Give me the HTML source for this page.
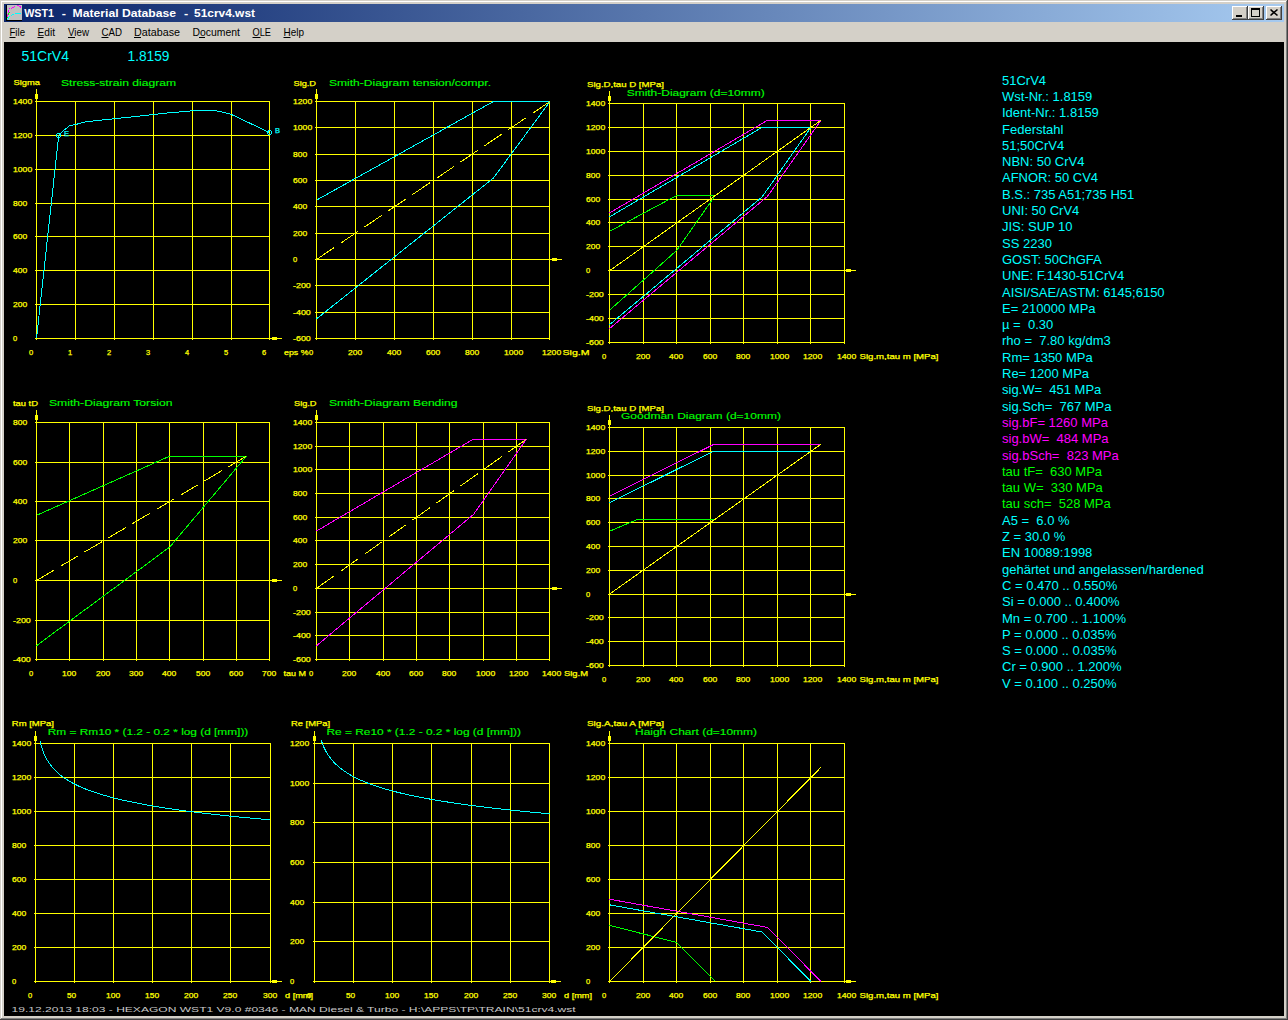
<!DOCTYPE html>
<html lang="en"><head><meta charset="utf-8"><title>WST1 - Material Database - 51crv4.wst</title>
<style>html,body{margin:0;padding:0;background:#d4d0c8;overflow:hidden}svg{display:block;font-family:'Liberation Sans', sans-serif}text{white-space:pre}.g rect,.g polyline,.g circle{shape-rendering:crispEdges}</style></head><body>
<svg width="1288" height="1020" viewBox="0 0 1288 1020">
<defs><linearGradient id="tg" x1="0" y1="0" x2="1" y2="0"><stop offset="0" stop-color="#0a246a"/><stop offset="1" stop-color="#a6caf0"/></linearGradient></defs>
<rect x="0" y="0" width="1288" height="1020" fill="#d4d0c8"/>
<rect x="1" y="1" width="1285" height="1" fill="#ffffff"/>
<rect x="1" y="1" width="1" height="1017" fill="#ffffff"/>
<rect x="1286" y="1" width="1" height="1018" fill="#808080"/>
<rect x="1" y="1018" width="1286" height="1" fill="#808080"/>
<rect x="1287" y="0" width="1" height="1020" fill="#404040"/>
<rect x="0" y="1019" width="1288" height="1" fill="#404040"/>
<rect x="4" y="4" width="1280" height="18" fill="url(#tg)"/>
<g class="g">
<rect x="6" y="5" width="16" height="16" fill="#c0c0c0"/>
<rect x="6" y="5" width="1" height="16" fill="#000000"/>
<rect x="6" y="20" width="16" height="1" fill="#000000"/>
<rect x="17" y="5" width="1" height="1" fill="#ff00ff"/>
<rect x="18" y="5" width="1" height="1" fill="#ff00ff"/>
<rect x="19" y="6" width="1" height="1" fill="#ff00ff"/>
<rect x="20" y="6" width="1" height="1" fill="#ff00ff"/>
<rect x="20" y="7" width="1" height="1" fill="#ff00ff"/>
<rect x="14" y="6" width="1" height="1" fill="#ff00ff"/>
<rect x="12" y="7" width="1" height="1" fill="#ff00ff"/>
<rect x="13" y="7" width="1" height="1" fill="#ff00ff"/>
<rect x="11" y="8" width="1" height="1" fill="#ff00ff"/>
<rect x="9" y="8" width="1" height="1" fill="#ff00ff"/>
<rect x="8" y="10" width="1" height="1" fill="#ff00ff"/>
<rect x="8" y="11" width="1" height="1" fill="#ff00ff"/>
<rect x="8" y="12" width="1" height="1" fill="#ff00ff"/>
<rect x="7" y="14" width="1" height="1" fill="#ff00ff"/>
<rect x="7" y="15" width="1" height="1" fill="#ff00ff"/>
<rect x="7" y="16" width="1" height="1" fill="#ff00ff"/>
<rect x="9" y="12" width="1" height="1" fill="#00ff00"/>
<rect x="8" y="13" width="1" height="1" fill="#00ff00"/>
<rect x="8" y="14" width="1" height="1" fill="#00ff00"/>
<rect x="7" y="17" width="1" height="1" fill="#00ff00"/>
<rect x="15" y="13" width="1" height="1" fill="#00ffff"/>
<rect x="16" y="13" width="1" height="1" fill="#00ffff"/>
<rect x="17" y="13" width="1" height="1" fill="#00ffff"/>
<rect x="18" y="13" width="1" height="1" fill="#00ffff"/>
<rect x="19" y="13" width="1" height="1" fill="#00ffff"/>
<rect x="20" y="13" width="1" height="1" fill="#00ffff"/>
<rect x="12" y="14" width="1" height="1" fill="#00ffff"/>
<rect x="13" y="14" width="1" height="1" fill="#00ffff"/>
<rect x="11" y="15" width="1" height="1" fill="#00ffff"/>
<rect x="9" y="16" width="1" height="1" fill="#00ffff"/>
<rect x="8" y="17" width="1" height="1" fill="#00ffff"/>
<rect x="8" y="18" width="1" height="1" fill="#00ffff"/>
<rect x="7" y="19" width="1" height="1" fill="#00ffff"/>
</g>
<text y="17" font-size="11" font-weight="bold" fill="#ffffff"><tspan x="24.2" textLength="29.8" lengthAdjust="spacingAndGlyphs">WST1</tspan><tspan x="61.8" textLength="4.2" lengthAdjust="spacingAndGlyphs">-</tspan><tspan x="72.6" textLength="103.4" lengthAdjust="spacingAndGlyphs">Material Database</tspan><tspan x="184" textLength="4.2" lengthAdjust="spacingAndGlyphs">-</tspan><tspan x="194" textLength="61" lengthAdjust="spacingAndGlyphs">51crv4.wst</tspan></text>
<g class="g">
<rect x="1232" y="6" width="16" height="14" fill="#d4d0c8"/>
<rect x="1232" y="6" width="15" height="1" fill="#ffffff"/>
<rect x="1232" y="6" width="1" height="13" fill="#ffffff"/>
<rect x="1247" y="6" width="1" height="14" fill="#404040"/>
<rect x="1232" y="19" width="16" height="1" fill="#404040"/>
<rect x="1246" y="7" width="1" height="12" fill="#808080"/>
<rect x="1233" y="18" width="14" height="1" fill="#808080"/>
<rect x="1236" y="15" width="6" height="2" fill="#000"/>
<rect x="1248" y="6" width="16" height="14" fill="#d4d0c8"/>
<rect x="1248" y="6" width="15" height="1" fill="#ffffff"/>
<rect x="1248" y="6" width="1" height="13" fill="#ffffff"/>
<rect x="1263" y="6" width="1" height="14" fill="#404040"/>
<rect x="1248" y="19" width="16" height="1" fill="#404040"/>
<rect x="1262" y="7" width="1" height="12" fill="#808080"/>
<rect x="1249" y="18" width="14" height="1" fill="#808080"/>
<rect x="1251" y="8" width="9" height="9" fill="#000"/>
<rect x="1252" y="10" width="7" height="6" fill="#d4d0c8"/>
<rect x="1266" y="6" width="16" height="14" fill="#d4d0c8"/>
<rect x="1266" y="6" width="15" height="1" fill="#ffffff"/>
<rect x="1266" y="6" width="1" height="13" fill="#ffffff"/>
<rect x="1281" y="6" width="1" height="14" fill="#404040"/>
<rect x="1266" y="19" width="16" height="1" fill="#404040"/>
<rect x="1280" y="7" width="1" height="12" fill="#808080"/>
<rect x="1267" y="18" width="14" height="1" fill="#808080"/>
<path d="M1270.5 9.5 L1277.5 15.5 M1277.5 9.5 L1270.5 15.5" stroke="#000" stroke-width="1.6" fill="none"/>
</g>
<text x="9.5" y="36" font-size="11" fill="#000000" textLength="15.5" lengthAdjust="spacingAndGlyphs">File</text>
<rect x="9.5" y="37" width="6" height="1" fill="#000000"/>
<text x="37.5" y="36" font-size="11" fill="#000000" textLength="17.5" lengthAdjust="spacingAndGlyphs">Edit</text>
<rect x="37.5" y="37" width="6" height="1" fill="#000000"/>
<text x="68" y="36" font-size="11" fill="#000000" textLength="21" lengthAdjust="spacingAndGlyphs">View</text>
<rect x="68" y="37" width="7" height="1" fill="#000000"/>
<text x="101.5" y="36" font-size="11" fill="#000000" textLength="20.5" lengthAdjust="spacingAndGlyphs">CAD</text>
<rect x="101.5" y="37" width="7" height="1" fill="#000000"/>
<text x="134" y="36" font-size="11" fill="#000000" textLength="46" lengthAdjust="spacingAndGlyphs">Database</text>
<rect x="134" y="37" width="7" height="1" fill="#000000"/>
<text x="192.5" y="36" font-size="11" fill="#000000" textLength="47.5" lengthAdjust="spacingAndGlyphs">Document</text>
<rect x="199" y="37" width="6" height="1" fill="#000000"/>
<text x="252.5" y="36" font-size="11" fill="#000000" textLength="18.5" lengthAdjust="spacingAndGlyphs">OLE</text>
<rect x="252.5" y="37" width="8" height="1" fill="#000000"/>
<text x="283.5" y="36" font-size="11" fill="#000000" textLength="20.5" lengthAdjust="spacingAndGlyphs">Help</text>
<rect x="283.5" y="37" width="7" height="1" fill="#000000"/>
<rect x="4" y="42" width="1280" height="974" fill="#000000"/>
<text x="21.5" y="61" font-size="14" fill="#00ffff" textLength="47.5" lengthAdjust="spacingAndGlyphs">51CrV4</text>
<text x="127.5" y="61" font-size="14" fill="#00ffff" textLength="42" lengthAdjust="spacingAndGlyphs">1.8159</text>
<text x="1002" y="84.6" font-size="13" fill="#00ffff" xml:space="preserve">51CrV4</text>
<text x="1002" y="100.9" font-size="13" fill="#00ffff" xml:space="preserve">Wst-Nr.: 1.8159</text>
<text x="1002" y="117.2" font-size="13" fill="#00ffff" xml:space="preserve">Ident-Nr.: 1.8159</text>
<text x="1002" y="133.5" font-size="13" fill="#00ffff" xml:space="preserve">Federstahl</text>
<text x="1002" y="149.8" font-size="13" fill="#00ffff" xml:space="preserve">51;50CrV4</text>
<text x="1002" y="166.1" font-size="13" fill="#00ffff" xml:space="preserve">NBN: 50 CrV4</text>
<text x="1002" y="182.4" font-size="13" fill="#00ffff" xml:space="preserve">AFNOR: 50 CV4</text>
<text x="1002" y="198.7" font-size="13" fill="#00ffff" xml:space="preserve">B.S.: 735 A51;735 H51</text>
<text x="1002" y="215" font-size="13" fill="#00ffff" xml:space="preserve">UNI: 50 CrV4</text>
<text x="1002" y="231.3" font-size="13" fill="#00ffff" xml:space="preserve">JIS: SUP 10</text>
<text x="1002" y="247.6" font-size="13" fill="#00ffff" xml:space="preserve">SS 2230</text>
<text x="1002" y="263.9" font-size="13" fill="#00ffff" xml:space="preserve">GOST: 50ChGFA</text>
<text x="1002" y="280.2" font-size="13" fill="#00ffff" xml:space="preserve">UNE: F.1430-51CrV4</text>
<text x="1002" y="296.5" font-size="13" fill="#00ffff" xml:space="preserve">AISI/SAE/ASTM: 6145;6150</text>
<text x="1002" y="312.8" font-size="13" fill="#00ffff" xml:space="preserve">E= 210000 MPa</text>
<text x="1002" y="329.1" font-size="13" fill="#00ffff" xml:space="preserve">µ =  0.30</text>
<text x="1002" y="345.4" font-size="13" fill="#00ffff" xml:space="preserve">rho =  7.80 kg/dm3</text>
<text x="1002" y="361.7" font-size="13" fill="#00ffff" xml:space="preserve">Rm= 1350 MPa</text>
<text x="1002" y="378" font-size="13" fill="#00ffff" xml:space="preserve">Re= 1200 MPa</text>
<text x="1002" y="394.3" font-size="13" fill="#00ffff" xml:space="preserve">sig.W=  451 MPa</text>
<text x="1002" y="410.6" font-size="13" fill="#00ffff" xml:space="preserve">sig.Sch=  767 MPa</text>
<text x="1002" y="426.9" font-size="13" fill="#ff00ff" xml:space="preserve">sig.bF= 1260 MPa</text>
<text x="1002" y="443.2" font-size="13" fill="#ff00ff" xml:space="preserve">sig.bW=  484 MPa</text>
<text x="1002" y="459.5" font-size="13" fill="#ff00ff" xml:space="preserve">sig.bSch=  823 MPa</text>
<text x="1002" y="475.8" font-size="13" fill="#00ff00" xml:space="preserve">tau tF=  630 MPa</text>
<text x="1002" y="492.1" font-size="13" fill="#00ff00" xml:space="preserve">tau W=  330 MPa</text>
<text x="1002" y="508.4" font-size="13" fill="#00ff00" xml:space="preserve">tau sch=  528 MPa</text>
<text x="1002" y="524.7" font-size="13" fill="#00ffff" xml:space="preserve">A5 =  6.0 %</text>
<text x="1002" y="541" font-size="13" fill="#00ffff" xml:space="preserve">Z = 30.0 %</text>
<text x="1002" y="557.3" font-size="13" fill="#00ffff" xml:space="preserve">EN 10089:1998</text>
<text x="1002" y="573.6" font-size="13" fill="#00ffff" xml:space="preserve">gehärtet und angelassen/hardened</text>
<text x="1002" y="589.9" font-size="13" fill="#00ffff" xml:space="preserve">C = 0.470 .. 0.550%</text>
<text x="1002" y="606.2" font-size="13" fill="#00ffff" xml:space="preserve">Si = 0.000 .. 0.400%</text>
<text x="1002" y="622.5" font-size="13" fill="#00ffff" xml:space="preserve">Mn = 0.700 .. 1.100%</text>
<text x="1002" y="638.8" font-size="13" fill="#00ffff" xml:space="preserve">P = 0.000 .. 0.035%</text>
<text x="1002" y="655.1" font-size="13" fill="#00ffff" xml:space="preserve">S = 0.000 .. 0.035%</text>
<text x="1002" y="671.4" font-size="13" fill="#00ffff" xml:space="preserve">Cr = 0.900 .. 1.200%</text>
<text x="1002" y="687.7" font-size="13" fill="#00ffff" xml:space="preserve">V = 0.100 .. 0.250%</text>
<g class="g">
<rect x="35" y="338" width="235" height="1" fill="#ffff00"/>
<text x="13" y="340.6" font-size="7" fill="#ffff00" textLength="4.2" lengthAdjust="spacingAndGlyphs" stroke="#ffff00" stroke-width="0.25">0</text>
<rect x="35" y="304" width="235" height="1" fill="#ffff00"/>
<text x="13" y="306.6" font-size="7" fill="#ffff00" textLength="14.2" lengthAdjust="spacingAndGlyphs" stroke="#ffff00" stroke-width="0.25">200</text>
<rect x="35" y="270" width="235" height="1" fill="#ffff00"/>
<text x="13" y="272.6" font-size="7" fill="#ffff00" textLength="14.2" lengthAdjust="spacingAndGlyphs" stroke="#ffff00" stroke-width="0.25">400</text>
<rect x="35" y="236" width="235" height="1" fill="#ffff00"/>
<text x="13" y="238.6" font-size="7" fill="#ffff00" textLength="14.2" lengthAdjust="spacingAndGlyphs" stroke="#ffff00" stroke-width="0.25">600</text>
<rect x="35" y="203" width="235" height="1" fill="#ffff00"/>
<text x="13" y="205.6" font-size="7" fill="#ffff00" textLength="14.2" lengthAdjust="spacingAndGlyphs" stroke="#ffff00" stroke-width="0.25">800</text>
<rect x="35" y="169" width="235" height="1" fill="#ffff00"/>
<text x="13" y="171.6" font-size="7" fill="#ffff00" textLength="19.2" lengthAdjust="spacingAndGlyphs" stroke="#ffff00" stroke-width="0.25">1000</text>
<rect x="35" y="135" width="235" height="1" fill="#ffff00"/>
<text x="13" y="137.6" font-size="7" fill="#ffff00" textLength="19.2" lengthAdjust="spacingAndGlyphs" stroke="#ffff00" stroke-width="0.25">1200</text>
<rect x="35" y="101" width="235" height="1" fill="#ffff00"/>
<text x="13" y="103.6" font-size="7" fill="#ffff00" textLength="19.2" lengthAdjust="spacingAndGlyphs" stroke="#ffff00" stroke-width="0.25">1400</text>
<rect x="36" y="101" width="1" height="239" fill="#ffff00"/>
<text x="29" y="355" font-size="7" fill="#ffff00" textLength="4.2" lengthAdjust="spacingAndGlyphs" stroke="#ffff00" stroke-width="0.25">0</text>
<rect x="75" y="101" width="1" height="239" fill="#ffff00"/>
<text x="68" y="355" font-size="7" fill="#ffff00" textLength="4.2" lengthAdjust="spacingAndGlyphs" stroke="#ffff00" stroke-width="0.25">1</text>
<rect x="114" y="101" width="1" height="239" fill="#ffff00"/>
<text x="107" y="355" font-size="7" fill="#ffff00" textLength="4.2" lengthAdjust="spacingAndGlyphs" stroke="#ffff00" stroke-width="0.25">2</text>
<rect x="153" y="101" width="1" height="239" fill="#ffff00"/>
<text x="146" y="355" font-size="7" fill="#ffff00" textLength="4.2" lengthAdjust="spacingAndGlyphs" stroke="#ffff00" stroke-width="0.25">3</text>
<rect x="192" y="101" width="1" height="239" fill="#ffff00"/>
<text x="185" y="355" font-size="7" fill="#ffff00" textLength="4.2" lengthAdjust="spacingAndGlyphs" stroke="#ffff00" stroke-width="0.25">4</text>
<rect x="231" y="101" width="1" height="239" fill="#ffff00"/>
<text x="224" y="355" font-size="7" fill="#ffff00" textLength="4.2" lengthAdjust="spacingAndGlyphs" stroke="#ffff00" stroke-width="0.25">5</text>
<rect x="269" y="101" width="1" height="239" fill="#ffff00"/>
<text x="262" y="355" font-size="7" fill="#ffff00" textLength="4.2" lengthAdjust="spacingAndGlyphs" stroke="#ffff00" stroke-width="0.25">6</text>
<rect x="36" y="89" width="1" height="13" fill="#ffff00"/>
<rect x="35" y="94" width="3" height="5" fill="#ffff00"/>
<rect x="269" y="338" width="13" height="1" fill="#ffff00"/>
<rect x="272" y="337" width="5" height="3" fill="#ffff00"/>
<text x="13.5" y="85" font-size="7" fill="#ffff00" textLength="26.5" lengthAdjust="spacingAndGlyphs" stroke="#ffff00" stroke-width="0.25">Sigma</text>
<text x="61" y="86" font-size="9" fill="#00ff00" textLength="115" lengthAdjust="spacingAndGlyphs" stroke="#00ff00" stroke-width="0.12">Stress-strain diagram</text>
<text x="284" y="355" font-size="7" fill="#ffff00" textLength="24.5" lengthAdjust="spacingAndGlyphs" stroke="#ffff00" stroke-width="0.25">eps %</text>
<polyline points="36.5,338.5 58.7,135.5 62.5,131.5 69.5,125.7 75.8,124.5 85.8,121.7 115.1,118.7 153.5,114.5 174,112.3 186.5,111.5 194.5,110.5 213.5,110.5 219.5,111.5 224.5,112.5 231.5,114.5 269.5,132.5" fill="none" stroke="#00ffff" stroke-width="1"/>
<circle cx="58.5" cy="135.5" r="2" fill="none" stroke="#00ffff"/>
<circle cx="269.5" cy="132.5" r="2" fill="none" stroke="#00ffff"/>
<text x="64" y="136" font-size="6.5" fill="#00ffff" textLength="5" lengthAdjust="spacingAndGlyphs" stroke="#00ffff" stroke-width="0.25">E</text>
<text x="275" y="132.9" font-size="6.5" fill="#00ffff" textLength="5" lengthAdjust="spacingAndGlyphs" stroke="#00ffff" stroke-width="0.25">B</text>
<rect x="315" y="338" width="235" height="1" fill="#ffff00"/>
<text x="293" y="340.6" font-size="7" fill="#ffff00" textLength="17.8" lengthAdjust="spacingAndGlyphs" stroke="#ffff00" stroke-width="0.25">-600</text>
<rect x="315" y="312" width="235" height="1" fill="#ffff00"/>
<text x="293" y="314.6" font-size="7" fill="#ffff00" textLength="17.8" lengthAdjust="spacingAndGlyphs" stroke="#ffff00" stroke-width="0.25">-400</text>
<rect x="315" y="285" width="235" height="1" fill="#ffff00"/>
<text x="293" y="287.6" font-size="7" fill="#ffff00" textLength="17.8" lengthAdjust="spacingAndGlyphs" stroke="#ffff00" stroke-width="0.25">-200</text>
<rect x="315" y="259" width="235" height="1" fill="#ffff00"/>
<text x="293" y="261.6" font-size="7" fill="#ffff00" textLength="4.2" lengthAdjust="spacingAndGlyphs" stroke="#ffff00" stroke-width="0.25">0</text>
<rect x="315" y="233" width="235" height="1" fill="#ffff00"/>
<text x="293" y="235.6" font-size="7" fill="#ffff00" textLength="14.2" lengthAdjust="spacingAndGlyphs" stroke="#ffff00" stroke-width="0.25">200</text>
<rect x="315" y="206" width="235" height="1" fill="#ffff00"/>
<text x="293" y="208.6" font-size="7" fill="#ffff00" textLength="14.2" lengthAdjust="spacingAndGlyphs" stroke="#ffff00" stroke-width="0.25">400</text>
<rect x="315" y="180" width="235" height="1" fill="#ffff00"/>
<text x="293" y="182.6" font-size="7" fill="#ffff00" textLength="14.2" lengthAdjust="spacingAndGlyphs" stroke="#ffff00" stroke-width="0.25">600</text>
<rect x="315" y="154" width="235" height="1" fill="#ffff00"/>
<text x="293" y="156.6" font-size="7" fill="#ffff00" textLength="14.2" lengthAdjust="spacingAndGlyphs" stroke="#ffff00" stroke-width="0.25">800</text>
<rect x="315" y="127" width="235" height="1" fill="#ffff00"/>
<text x="293" y="129.6" font-size="7" fill="#ffff00" textLength="19.2" lengthAdjust="spacingAndGlyphs" stroke="#ffff00" stroke-width="0.25">1000</text>
<rect x="315" y="101" width="235" height="1" fill="#ffff00"/>
<text x="293" y="103.6" font-size="7" fill="#ffff00" textLength="19.2" lengthAdjust="spacingAndGlyphs" stroke="#ffff00" stroke-width="0.25">1200</text>
<rect x="316" y="101" width="1" height="239" fill="#ffff00"/>
<text x="309" y="355" font-size="7" fill="#ffff00" textLength="4.2" lengthAdjust="spacingAndGlyphs" stroke="#ffff00" stroke-width="0.25">0</text>
<rect x="355" y="101" width="1" height="239" fill="#ffff00"/>
<text x="348" y="355" font-size="7" fill="#ffff00" textLength="14.2" lengthAdjust="spacingAndGlyphs" stroke="#ffff00" stroke-width="0.25">200</text>
<rect x="394" y="101" width="1" height="239" fill="#ffff00"/>
<text x="387" y="355" font-size="7" fill="#ffff00" textLength="14.2" lengthAdjust="spacingAndGlyphs" stroke="#ffff00" stroke-width="0.25">400</text>
<rect x="433" y="101" width="1" height="239" fill="#ffff00"/>
<text x="426" y="355" font-size="7" fill="#ffff00" textLength="14.2" lengthAdjust="spacingAndGlyphs" stroke="#ffff00" stroke-width="0.25">600</text>
<rect x="472" y="101" width="1" height="239" fill="#ffff00"/>
<text x="465" y="355" font-size="7" fill="#ffff00" textLength="14.2" lengthAdjust="spacingAndGlyphs" stroke="#ffff00" stroke-width="0.25">800</text>
<rect x="511" y="101" width="1" height="239" fill="#ffff00"/>
<text x="504" y="355" font-size="7" fill="#ffff00" textLength="19.2" lengthAdjust="spacingAndGlyphs" stroke="#ffff00" stroke-width="0.25">1000</text>
<rect x="549" y="101" width="1" height="239" fill="#ffff00"/>
<text x="542" y="355" font-size="7" fill="#ffff00" textLength="19.2" lengthAdjust="spacingAndGlyphs" stroke="#ffff00" stroke-width="0.25">1200</text>
<rect x="316" y="89" width="1" height="13" fill="#ffff00"/>
<rect x="315" y="94" width="3" height="5" fill="#ffff00"/>
<rect x="549" y="259" width="13" height="1" fill="#ffff00"/>
<rect x="552" y="258" width="5" height="3" fill="#ffff00"/>
<text x="293.5" y="85.5" font-size="7" fill="#ffff00" textLength="22.5" lengthAdjust="spacingAndGlyphs" stroke="#ffff00" stroke-width="0.25">Sig.D</text>
<text x="329" y="86" font-size="9" fill="#00ff00" textLength="162" lengthAdjust="spacingAndGlyphs" stroke="#00ff00" stroke-width="0.12">Smith-Diagram tension/compr.</text>
<text x="562.5" y="355" font-size="7" fill="#ffff00" textLength="27" lengthAdjust="spacingAndGlyphs" stroke="#ffff00" stroke-width="0.25">Sig.M</text>
<polyline points="316.5,200.12 493.37,101.5 550,101.5" fill="none" stroke="#00ffff" stroke-width="1"/>
<polyline points="316.5,318.88 493.37,178.13 550,101.5" fill="none" stroke="#00ffff" stroke-width="1"/>
<polyline points="316.5,259.5 550,101.5" fill="none" stroke="#ffff00" stroke-width="1" stroke-dasharray="20.83 8.15"/>
<rect x="608" y="342" width="237" height="1" fill="#ffff00"/>
<text x="586" y="344.6" font-size="7" fill="#ffff00" textLength="17.8" lengthAdjust="spacingAndGlyphs" stroke="#ffff00" stroke-width="0.25">-600</text>
<rect x="608" y="318" width="237" height="1" fill="#ffff00"/>
<text x="586" y="320.6" font-size="7" fill="#ffff00" textLength="17.8" lengthAdjust="spacingAndGlyphs" stroke="#ffff00" stroke-width="0.25">-400</text>
<rect x="608" y="294" width="237" height="1" fill="#ffff00"/>
<text x="586" y="296.6" font-size="7" fill="#ffff00" textLength="17.8" lengthAdjust="spacingAndGlyphs" stroke="#ffff00" stroke-width="0.25">-200</text>
<rect x="608" y="270" width="237" height="1" fill="#ffff00"/>
<text x="586" y="272.6" font-size="7" fill="#ffff00" textLength="4.2" lengthAdjust="spacingAndGlyphs" stroke="#ffff00" stroke-width="0.25">0</text>
<rect x="608" y="246" width="237" height="1" fill="#ffff00"/>
<text x="586" y="248.6" font-size="7" fill="#ffff00" textLength="14.2" lengthAdjust="spacingAndGlyphs" stroke="#ffff00" stroke-width="0.25">200</text>
<rect x="608" y="222" width="237" height="1" fill="#ffff00"/>
<text x="586" y="224.6" font-size="7" fill="#ffff00" textLength="14.2" lengthAdjust="spacingAndGlyphs" stroke="#ffff00" stroke-width="0.25">400</text>
<rect x="608" y="199" width="237" height="1" fill="#ffff00"/>
<text x="586" y="201.6" font-size="7" fill="#ffff00" textLength="14.2" lengthAdjust="spacingAndGlyphs" stroke="#ffff00" stroke-width="0.25">600</text>
<rect x="608" y="175" width="237" height="1" fill="#ffff00"/>
<text x="586" y="177.6" font-size="7" fill="#ffff00" textLength="14.2" lengthAdjust="spacingAndGlyphs" stroke="#ffff00" stroke-width="0.25">800</text>
<rect x="608" y="151" width="237" height="1" fill="#ffff00"/>
<text x="586" y="153.6" font-size="7" fill="#ffff00" textLength="19.2" lengthAdjust="spacingAndGlyphs" stroke="#ffff00" stroke-width="0.25">1000</text>
<rect x="608" y="127" width="237" height="1" fill="#ffff00"/>
<text x="586" y="129.6" font-size="7" fill="#ffff00" textLength="19.2" lengthAdjust="spacingAndGlyphs" stroke="#ffff00" stroke-width="0.25">1200</text>
<rect x="608" y="103" width="237" height="1" fill="#ffff00"/>
<text x="586" y="105.6" font-size="7" fill="#ffff00" textLength="19.2" lengthAdjust="spacingAndGlyphs" stroke="#ffff00" stroke-width="0.25">1400</text>
<rect x="609" y="103" width="1" height="241" fill="#ffff00"/>
<text x="602" y="359" font-size="7" fill="#ffff00" textLength="4.2" lengthAdjust="spacingAndGlyphs" stroke="#ffff00" stroke-width="0.25">0</text>
<rect x="643" y="103" width="1" height="241" fill="#ffff00"/>
<text x="636" y="359" font-size="7" fill="#ffff00" textLength="14.2" lengthAdjust="spacingAndGlyphs" stroke="#ffff00" stroke-width="0.25">200</text>
<rect x="676" y="103" width="1" height="241" fill="#ffff00"/>
<text x="669" y="359" font-size="7" fill="#ffff00" textLength="14.2" lengthAdjust="spacingAndGlyphs" stroke="#ffff00" stroke-width="0.25">400</text>
<rect x="710" y="103" width="1" height="241" fill="#ffff00"/>
<text x="703" y="359" font-size="7" fill="#ffff00" textLength="14.2" lengthAdjust="spacingAndGlyphs" stroke="#ffff00" stroke-width="0.25">600</text>
<rect x="743" y="103" width="1" height="241" fill="#ffff00"/>
<text x="736" y="359" font-size="7" fill="#ffff00" textLength="14.2" lengthAdjust="spacingAndGlyphs" stroke="#ffff00" stroke-width="0.25">800</text>
<rect x="777" y="103" width="1" height="241" fill="#ffff00"/>
<text x="770" y="359" font-size="7" fill="#ffff00" textLength="19.2" lengthAdjust="spacingAndGlyphs" stroke="#ffff00" stroke-width="0.25">1000</text>
<rect x="810" y="103" width="1" height="241" fill="#ffff00"/>
<text x="803" y="359" font-size="7" fill="#ffff00" textLength="19.2" lengthAdjust="spacingAndGlyphs" stroke="#ffff00" stroke-width="0.25">1200</text>
<rect x="844" y="103" width="1" height="241" fill="#ffff00"/>
<text x="837" y="359" font-size="7" fill="#ffff00" textLength="19.2" lengthAdjust="spacingAndGlyphs" stroke="#ffff00" stroke-width="0.25">1400</text>
<rect x="609" y="91" width="1" height="13" fill="#ffff00"/>
<rect x="608" y="96" width="3" height="5" fill="#ffff00"/>
<rect x="844" y="270" width="12" height="1" fill="#ffff00"/>
<rect x="846" y="269" width="5" height="3" fill="#ffff00"/>
<text x="587" y="87" font-size="7" fill="#ffff00" textLength="77" lengthAdjust="spacingAndGlyphs" stroke="#ffff00" stroke-width="0.25">Sig.D,tau D [MPa]</text>
<text x="626.7" y="95.7" font-size="9" fill="#00ff00" textLength="138" lengthAdjust="spacingAndGlyphs" stroke="#00ff00" stroke-width="0.12">Smith-Diagram (d=10mm)</text>
<text x="859.5" y="359" font-size="7" fill="#ffff00" textLength="79" lengthAdjust="spacingAndGlyphs" stroke="#ffff00" stroke-width="0.25">Sig.m,tau m [MPa]</text>
<polyline points="609.5,212.96 767.61,120.23 821,120.23" fill="none" stroke="#ff00ff" stroke-width="1"/>
<polyline points="609.5,328.64 767.61,196.24 821,120.23" fill="none" stroke="#ff00ff" stroke-width="1"/>
<polyline points="609.5,216.91 762.08,127.4 810.93,127.4" fill="none" stroke="#00ffff" stroke-width="1"/>
<polyline points="609.5,324.69 762.08,196.95 810.93,127.4" fill="none" stroke="#00ffff" stroke-width="1"/>
<polyline points="609.5,231.37 676.64,195.52 715.25,195.52" fill="none" stroke="#00ff00" stroke-width="1"/>
<polyline points="609.5,310.24 676.64,250.49 715.25,195.52" fill="none" stroke="#00ff00" stroke-width="1"/>
<polyline points="609.5,270.8 821,120.23" fill="none" stroke="#ffff00" stroke-width="1"/>
<rect x="35" y="659" width="235" height="1" fill="#ffff00"/>
<text x="13" y="661.6" font-size="7" fill="#ffff00" textLength="17.8" lengthAdjust="spacingAndGlyphs" stroke="#ffff00" stroke-width="0.25">-400</text>
<rect x="35" y="620" width="235" height="1" fill="#ffff00"/>
<text x="13" y="622.6" font-size="7" fill="#ffff00" textLength="17.8" lengthAdjust="spacingAndGlyphs" stroke="#ffff00" stroke-width="0.25">-200</text>
<rect x="35" y="580" width="235" height="1" fill="#ffff00"/>
<text x="13" y="582.6" font-size="7" fill="#ffff00" textLength="4.2" lengthAdjust="spacingAndGlyphs" stroke="#ffff00" stroke-width="0.25">0</text>
<rect x="35" y="540" width="235" height="1" fill="#ffff00"/>
<text x="13" y="542.6" font-size="7" fill="#ffff00" textLength="14.2" lengthAdjust="spacingAndGlyphs" stroke="#ffff00" stroke-width="0.25">200</text>
<rect x="35" y="501" width="235" height="1" fill="#ffff00"/>
<text x="13" y="503.6" font-size="7" fill="#ffff00" textLength="14.2" lengthAdjust="spacingAndGlyphs" stroke="#ffff00" stroke-width="0.25">400</text>
<rect x="35" y="462" width="235" height="1" fill="#ffff00"/>
<text x="13" y="464.6" font-size="7" fill="#ffff00" textLength="14.2" lengthAdjust="spacingAndGlyphs" stroke="#ffff00" stroke-width="0.25">600</text>
<rect x="35" y="422" width="235" height="1" fill="#ffff00"/>
<text x="13" y="424.6" font-size="7" fill="#ffff00" textLength="14.2" lengthAdjust="spacingAndGlyphs" stroke="#ffff00" stroke-width="0.25">800</text>
<rect x="36" y="422" width="1" height="239" fill="#ffff00"/>
<text x="29" y="676" font-size="7" fill="#ffff00" textLength="4.2" lengthAdjust="spacingAndGlyphs" stroke="#ffff00" stroke-width="0.25">0</text>
<rect x="69" y="422" width="1" height="239" fill="#ffff00"/>
<text x="62" y="676" font-size="7" fill="#ffff00" textLength="14.2" lengthAdjust="spacingAndGlyphs" stroke="#ffff00" stroke-width="0.25">100</text>
<rect x="103" y="422" width="1" height="239" fill="#ffff00"/>
<text x="96" y="676" font-size="7" fill="#ffff00" textLength="14.2" lengthAdjust="spacingAndGlyphs" stroke="#ffff00" stroke-width="0.25">200</text>
<rect x="136" y="422" width="1" height="239" fill="#ffff00"/>
<text x="129" y="676" font-size="7" fill="#ffff00" textLength="14.2" lengthAdjust="spacingAndGlyphs" stroke="#ffff00" stroke-width="0.25">300</text>
<rect x="169" y="422" width="1" height="239" fill="#ffff00"/>
<text x="162" y="676" font-size="7" fill="#ffff00" textLength="14.2" lengthAdjust="spacingAndGlyphs" stroke="#ffff00" stroke-width="0.25">400</text>
<rect x="203" y="422" width="1" height="239" fill="#ffff00"/>
<text x="196" y="676" font-size="7" fill="#ffff00" textLength="14.2" lengthAdjust="spacingAndGlyphs" stroke="#ffff00" stroke-width="0.25">500</text>
<rect x="236" y="422" width="1" height="239" fill="#ffff00"/>
<text x="229" y="676" font-size="7" fill="#ffff00" textLength="14.2" lengthAdjust="spacingAndGlyphs" stroke="#ffff00" stroke-width="0.25">600</text>
<rect x="269" y="422" width="1" height="239" fill="#ffff00"/>
<text x="262" y="676" font-size="7" fill="#ffff00" textLength="14.2" lengthAdjust="spacingAndGlyphs" stroke="#ffff00" stroke-width="0.25">700</text>
<rect x="36" y="410" width="1" height="13" fill="#ffff00"/>
<rect x="35" y="415" width="3" height="5" fill="#ffff00"/>
<rect x="269" y="580" width="13" height="1" fill="#ffff00"/>
<rect x="272" y="579" width="5" height="3" fill="#ffff00"/>
<text x="13" y="406" font-size="7" fill="#ffff00" textLength="25" lengthAdjust="spacingAndGlyphs" stroke="#ffff00" stroke-width="0.25">tau tD</text>
<text x="49" y="406" font-size="9" fill="#00ff00" textLength="123.5" lengthAdjust="spacingAndGlyphs" stroke="#00ff00" stroke-width="0.12">Smith-Diagram Torsion</text>
<text x="283.5" y="676" font-size="7" fill="#ffff00" textLength="22.5" lengthAdjust="spacingAndGlyphs" stroke="#ffff00" stroke-width="0.25">tau M</text>
<polyline points="36.5,515.33 169.83,456.08 246.5,456.08" fill="none" stroke="#00ff00" stroke-width="1"/>
<polyline points="36.5,645.67 169.83,546.92 246.5,456.08" fill="none" stroke="#00ff00" stroke-width="1"/>
<polyline points="36.5,580.5 246.5,456.08" fill="none" stroke="#ffff00" stroke-width="1" stroke-dasharray="20.05 7.85"/>
<rect x="315" y="659" width="235" height="1" fill="#ffff00"/>
<text x="293" y="661.6" font-size="7" fill="#ffff00" textLength="17.8" lengthAdjust="spacingAndGlyphs" stroke="#ffff00" stroke-width="0.25">-600</text>
<rect x="315" y="635" width="235" height="1" fill="#ffff00"/>
<text x="293" y="637.6" font-size="7" fill="#ffff00" textLength="17.8" lengthAdjust="spacingAndGlyphs" stroke="#ffff00" stroke-width="0.25">-400</text>
<rect x="315" y="612" width="235" height="1" fill="#ffff00"/>
<text x="293" y="614.6" font-size="7" fill="#ffff00" textLength="17.8" lengthAdjust="spacingAndGlyphs" stroke="#ffff00" stroke-width="0.25">-200</text>
<rect x="315" y="588" width="235" height="1" fill="#ffff00"/>
<text x="293" y="590.6" font-size="7" fill="#ffff00" textLength="4.2" lengthAdjust="spacingAndGlyphs" stroke="#ffff00" stroke-width="0.25">0</text>
<rect x="315" y="564" width="235" height="1" fill="#ffff00"/>
<text x="293" y="566.6" font-size="7" fill="#ffff00" textLength="14.2" lengthAdjust="spacingAndGlyphs" stroke="#ffff00" stroke-width="0.25">200</text>
<rect x="315" y="540" width="235" height="1" fill="#ffff00"/>
<text x="293" y="542.6" font-size="7" fill="#ffff00" textLength="14.2" lengthAdjust="spacingAndGlyphs" stroke="#ffff00" stroke-width="0.25">400</text>
<rect x="315" y="517" width="235" height="1" fill="#ffff00"/>
<text x="293" y="519.6" font-size="7" fill="#ffff00" textLength="14.2" lengthAdjust="spacingAndGlyphs" stroke="#ffff00" stroke-width="0.25">600</text>
<rect x="315" y="493" width="235" height="1" fill="#ffff00"/>
<text x="293" y="495.6" font-size="7" fill="#ffff00" textLength="14.2" lengthAdjust="spacingAndGlyphs" stroke="#ffff00" stroke-width="0.25">800</text>
<rect x="315" y="469" width="235" height="1" fill="#ffff00"/>
<text x="293" y="471.6" font-size="7" fill="#ffff00" textLength="19.2" lengthAdjust="spacingAndGlyphs" stroke="#ffff00" stroke-width="0.25">1000</text>
<rect x="315" y="446" width="235" height="1" fill="#ffff00"/>
<text x="293" y="448.6" font-size="7" fill="#ffff00" textLength="19.2" lengthAdjust="spacingAndGlyphs" stroke="#ffff00" stroke-width="0.25">1200</text>
<rect x="315" y="422" width="235" height="1" fill="#ffff00"/>
<text x="293" y="424.6" font-size="7" fill="#ffff00" textLength="19.2" lengthAdjust="spacingAndGlyphs" stroke="#ffff00" stroke-width="0.25">1400</text>
<rect x="316" y="422" width="1" height="239" fill="#ffff00"/>
<text x="309" y="676" font-size="7" fill="#ffff00" textLength="4.2" lengthAdjust="spacingAndGlyphs" stroke="#ffff00" stroke-width="0.25">0</text>
<rect x="349" y="422" width="1" height="239" fill="#ffff00"/>
<text x="342" y="676" font-size="7" fill="#ffff00" textLength="14.2" lengthAdjust="spacingAndGlyphs" stroke="#ffff00" stroke-width="0.25">200</text>
<rect x="383" y="422" width="1" height="239" fill="#ffff00"/>
<text x="376" y="676" font-size="7" fill="#ffff00" textLength="14.2" lengthAdjust="spacingAndGlyphs" stroke="#ffff00" stroke-width="0.25">400</text>
<rect x="416" y="422" width="1" height="239" fill="#ffff00"/>
<text x="409" y="676" font-size="7" fill="#ffff00" textLength="14.2" lengthAdjust="spacingAndGlyphs" stroke="#ffff00" stroke-width="0.25">600</text>
<rect x="449" y="422" width="1" height="239" fill="#ffff00"/>
<text x="442" y="676" font-size="7" fill="#ffff00" textLength="14.2" lengthAdjust="spacingAndGlyphs" stroke="#ffff00" stroke-width="0.25">800</text>
<rect x="483" y="422" width="1" height="239" fill="#ffff00"/>
<text x="476" y="676" font-size="7" fill="#ffff00" textLength="19.2" lengthAdjust="spacingAndGlyphs" stroke="#ffff00" stroke-width="0.25">1000</text>
<rect x="516" y="422" width="1" height="239" fill="#ffff00"/>
<text x="509" y="676" font-size="7" fill="#ffff00" textLength="19.2" lengthAdjust="spacingAndGlyphs" stroke="#ffff00" stroke-width="0.25">1200</text>
<rect x="549" y="422" width="1" height="239" fill="#ffff00"/>
<text x="542" y="676" font-size="7" fill="#ffff00" textLength="19.2" lengthAdjust="spacingAndGlyphs" stroke="#ffff00" stroke-width="0.25">1400</text>
<rect x="316" y="410" width="1" height="13" fill="#ffff00"/>
<rect x="315" y="415" width="3" height="5" fill="#ffff00"/>
<rect x="549" y="588" width="13" height="1" fill="#ffff00"/>
<rect x="552" y="587" width="5" height="3" fill="#ffff00"/>
<text x="294" y="406" font-size="7" fill="#ffff00" textLength="22.5" lengthAdjust="spacingAndGlyphs" stroke="#ffff00" stroke-width="0.25">Sig.D</text>
<text x="329" y="406" font-size="9" fill="#00ff00" textLength="128.5" lengthAdjust="spacingAndGlyphs" stroke="#00ff00" stroke-width="0.12">Smith-Diagram Bending</text>
<text x="564" y="676" font-size="7" fill="#ffff00" textLength="24" lengthAdjust="spacingAndGlyphs" stroke="#ffff00" stroke-width="0.25">Sig.M</text>
<polyline points="316.5,531.05 473.49,439.09 526.5,439.09" fill="none" stroke="#ff00ff" stroke-width="1"/>
<polyline points="316.5,645.75 473.49,514.47 526.5,439.09" fill="none" stroke="#ff00ff" stroke-width="1"/>
<polyline points="316.5,588.4 526.5,439.09" fill="none" stroke="#ffff00" stroke-width="1" stroke-dasharray="21.17 8.28"/>
<rect x="608" y="665" width="237" height="1" fill="#ffff00"/>
<text x="586" y="667.6" font-size="7" fill="#ffff00" textLength="17.8" lengthAdjust="spacingAndGlyphs" stroke="#ffff00" stroke-width="0.25">-600</text>
<rect x="608" y="641" width="237" height="1" fill="#ffff00"/>
<text x="586" y="643.6" font-size="7" fill="#ffff00" textLength="17.8" lengthAdjust="spacingAndGlyphs" stroke="#ffff00" stroke-width="0.25">-400</text>
<rect x="608" y="617" width="237" height="1" fill="#ffff00"/>
<text x="586" y="619.6" font-size="7" fill="#ffff00" textLength="17.8" lengthAdjust="spacingAndGlyphs" stroke="#ffff00" stroke-width="0.25">-200</text>
<rect x="608" y="594" width="237" height="1" fill="#ffff00"/>
<text x="586" y="596.6" font-size="7" fill="#ffff00" textLength="4.2" lengthAdjust="spacingAndGlyphs" stroke="#ffff00" stroke-width="0.25">0</text>
<rect x="608" y="570" width="237" height="1" fill="#ffff00"/>
<text x="586" y="572.6" font-size="7" fill="#ffff00" textLength="14.2" lengthAdjust="spacingAndGlyphs" stroke="#ffff00" stroke-width="0.25">200</text>
<rect x="608" y="546" width="237" height="1" fill="#ffff00"/>
<text x="586" y="548.6" font-size="7" fill="#ffff00" textLength="14.2" lengthAdjust="spacingAndGlyphs" stroke="#ffff00" stroke-width="0.25">400</text>
<rect x="608" y="522" width="237" height="1" fill="#ffff00"/>
<text x="586" y="524.6" font-size="7" fill="#ffff00" textLength="14.2" lengthAdjust="spacingAndGlyphs" stroke="#ffff00" stroke-width="0.25">600</text>
<rect x="608" y="498" width="237" height="1" fill="#ffff00"/>
<text x="586" y="500.6" font-size="7" fill="#ffff00" textLength="14.2" lengthAdjust="spacingAndGlyphs" stroke="#ffff00" stroke-width="0.25">800</text>
<rect x="608" y="475" width="237" height="1" fill="#ffff00"/>
<text x="586" y="477.6" font-size="7" fill="#ffff00" textLength="19.2" lengthAdjust="spacingAndGlyphs" stroke="#ffff00" stroke-width="0.25">1000</text>
<rect x="608" y="451" width="237" height="1" fill="#ffff00"/>
<text x="586" y="453.6" font-size="7" fill="#ffff00" textLength="19.2" lengthAdjust="spacingAndGlyphs" stroke="#ffff00" stroke-width="0.25">1200</text>
<rect x="608" y="427" width="237" height="1" fill="#ffff00"/>
<text x="586" y="429.6" font-size="7" fill="#ffff00" textLength="19.2" lengthAdjust="spacingAndGlyphs" stroke="#ffff00" stroke-width="0.25">1400</text>
<rect x="609" y="427" width="1" height="240" fill="#ffff00"/>
<text x="602" y="682" font-size="7" fill="#ffff00" textLength="4.2" lengthAdjust="spacingAndGlyphs" stroke="#ffff00" stroke-width="0.25">0</text>
<rect x="643" y="427" width="1" height="240" fill="#ffff00"/>
<text x="636" y="682" font-size="7" fill="#ffff00" textLength="14.2" lengthAdjust="spacingAndGlyphs" stroke="#ffff00" stroke-width="0.25">200</text>
<rect x="676" y="427" width="1" height="240" fill="#ffff00"/>
<text x="669" y="682" font-size="7" fill="#ffff00" textLength="14.2" lengthAdjust="spacingAndGlyphs" stroke="#ffff00" stroke-width="0.25">400</text>
<rect x="710" y="427" width="1" height="240" fill="#ffff00"/>
<text x="703" y="682" font-size="7" fill="#ffff00" textLength="14.2" lengthAdjust="spacingAndGlyphs" stroke="#ffff00" stroke-width="0.25">600</text>
<rect x="743" y="427" width="1" height="240" fill="#ffff00"/>
<text x="736" y="682" font-size="7" fill="#ffff00" textLength="14.2" lengthAdjust="spacingAndGlyphs" stroke="#ffff00" stroke-width="0.25">800</text>
<rect x="777" y="427" width="1" height="240" fill="#ffff00"/>
<text x="770" y="682" font-size="7" fill="#ffff00" textLength="19.2" lengthAdjust="spacingAndGlyphs" stroke="#ffff00" stroke-width="0.25">1000</text>
<rect x="810" y="427" width="1" height="240" fill="#ffff00"/>
<text x="803" y="682" font-size="7" fill="#ffff00" textLength="19.2" lengthAdjust="spacingAndGlyphs" stroke="#ffff00" stroke-width="0.25">1200</text>
<rect x="844" y="427" width="1" height="240" fill="#ffff00"/>
<text x="837" y="682" font-size="7" fill="#ffff00" textLength="19.2" lengthAdjust="spacingAndGlyphs" stroke="#ffff00" stroke-width="0.25">1400</text>
<rect x="609" y="415" width="1" height="13" fill="#ffff00"/>
<rect x="608" y="420" width="3" height="5" fill="#ffff00"/>
<rect x="844" y="594" width="12" height="1" fill="#ffff00"/>
<rect x="846" y="593" width="5" height="3" fill="#ffff00"/>
<text x="587" y="411" font-size="7" fill="#ffff00" textLength="77" lengthAdjust="spacingAndGlyphs" stroke="#ffff00" stroke-width="0.25">Sig.D,tau D [MPa]</text>
<text x="621" y="419.3" font-size="9" fill="#00ff00" textLength="160" lengthAdjust="spacingAndGlyphs" stroke="#00ff00" stroke-width="0.12">Goodman Diagram (d=10mm)</text>
<text x="859.5" y="682" font-size="7" fill="#ffff00" textLength="79" lengthAdjust="spacingAndGlyphs" stroke="#ffff00" stroke-width="0.25">Sig.m,tau m [MPa]</text>
<polyline points="609.5,496.16 714.23,444.16 821,444.16" fill="none" stroke="#ff00ff" stroke-width="1"/>
<polyline points="609.5,502.83 713.23,451.3 810.93,451.3" fill="none" stroke="#00ffff" stroke-width="1"/>
<polyline points="609.5,531.27 638.04,519.13 715.25,519.13" fill="none" stroke="#00ff00" stroke-width="1"/>
<polyline points="609.5,594.1 821,444.16" fill="none" stroke="#ffff00" stroke-width="1"/>
<rect x="34" y="981" width="237" height="1" fill="#ffff00"/>
<text x="12" y="983.6" font-size="7" fill="#ffff00" textLength="4.2" lengthAdjust="spacingAndGlyphs" stroke="#ffff00" stroke-width="0.25">0</text>
<rect x="34" y="947" width="237" height="1" fill="#ffff00"/>
<text x="12" y="949.6" font-size="7" fill="#ffff00" textLength="14.2" lengthAdjust="spacingAndGlyphs" stroke="#ffff00" stroke-width="0.25">200</text>
<rect x="34" y="913" width="237" height="1" fill="#ffff00"/>
<text x="12" y="915.6" font-size="7" fill="#ffff00" textLength="14.2" lengthAdjust="spacingAndGlyphs" stroke="#ffff00" stroke-width="0.25">400</text>
<rect x="34" y="879" width="237" height="1" fill="#ffff00"/>
<text x="12" y="881.6" font-size="7" fill="#ffff00" textLength="14.2" lengthAdjust="spacingAndGlyphs" stroke="#ffff00" stroke-width="0.25">600</text>
<rect x="34" y="845" width="237" height="1" fill="#ffff00"/>
<text x="12" y="847.6" font-size="7" fill="#ffff00" textLength="14.2" lengthAdjust="spacingAndGlyphs" stroke="#ffff00" stroke-width="0.25">800</text>
<rect x="34" y="811" width="237" height="1" fill="#ffff00"/>
<text x="12" y="813.6" font-size="7" fill="#ffff00" textLength="19.2" lengthAdjust="spacingAndGlyphs" stroke="#ffff00" stroke-width="0.25">1000</text>
<rect x="34" y="777" width="237" height="1" fill="#ffff00"/>
<text x="12" y="779.6" font-size="7" fill="#ffff00" textLength="19.2" lengthAdjust="spacingAndGlyphs" stroke="#ffff00" stroke-width="0.25">1200</text>
<rect x="34" y="743" width="237" height="1" fill="#ffff00"/>
<text x="12" y="745.6" font-size="7" fill="#ffff00" textLength="19.2" lengthAdjust="spacingAndGlyphs" stroke="#ffff00" stroke-width="0.25">1400</text>
<rect x="35" y="743" width="1" height="240" fill="#ffff00"/>
<text x="28" y="998" font-size="7" fill="#ffff00" textLength="4.2" lengthAdjust="spacingAndGlyphs" stroke="#ffff00" stroke-width="0.25">0</text>
<rect x="74" y="743" width="1" height="240" fill="#ffff00"/>
<text x="67" y="998" font-size="7" fill="#ffff00" textLength="9.2" lengthAdjust="spacingAndGlyphs" stroke="#ffff00" stroke-width="0.25">50</text>
<rect x="113" y="743" width="1" height="240" fill="#ffff00"/>
<text x="106" y="998" font-size="7" fill="#ffff00" textLength="14.2" lengthAdjust="spacingAndGlyphs" stroke="#ffff00" stroke-width="0.25">100</text>
<rect x="152" y="743" width="1" height="240" fill="#ffff00"/>
<text x="145" y="998" font-size="7" fill="#ffff00" textLength="14.2" lengthAdjust="spacingAndGlyphs" stroke="#ffff00" stroke-width="0.25">150</text>
<rect x="191" y="743" width="1" height="240" fill="#ffff00"/>
<text x="184" y="998" font-size="7" fill="#ffff00" textLength="14.2" lengthAdjust="spacingAndGlyphs" stroke="#ffff00" stroke-width="0.25">200</text>
<rect x="230" y="743" width="1" height="240" fill="#ffff00"/>
<text x="223" y="998" font-size="7" fill="#ffff00" textLength="14.2" lengthAdjust="spacingAndGlyphs" stroke="#ffff00" stroke-width="0.25">250</text>
<rect x="270" y="743" width="1" height="240" fill="#ffff00"/>
<text x="263" y="998" font-size="7" fill="#ffff00" textLength="14.2" lengthAdjust="spacingAndGlyphs" stroke="#ffff00" stroke-width="0.25">300</text>
<rect x="35" y="731" width="1" height="13" fill="#ffff00"/>
<rect x="34" y="736" width="3" height="5" fill="#ffff00"/>
<rect x="270" y="981" width="12" height="1" fill="#ffff00"/>
<rect x="272" y="980" width="5" height="3" fill="#ffff00"/>
<text x="11.8" y="726" font-size="7" fill="#ffff00" textLength="42.2" lengthAdjust="spacingAndGlyphs" stroke="#ffff00" stroke-width="0.25">Rm [MPa]</text>
<text x="47.8" y="735" font-size="9" fill="#00ff00" textLength="200.5" lengthAdjust="spacingAndGlyphs" stroke="#00ff00" stroke-width="0.12">Rm = Rm10 * (1.2 - 0.2 * log (d [mm]))</text>
<text x="285" y="998" font-size="7" fill="#ffff00" textLength="28" lengthAdjust="spacingAndGlyphs" stroke="#ffff00" stroke-width="0.25">d [mm]</text>
<polyline points="40.04,741.14 40.66,743.72 41.29,746 41.91,748.04 42.54,749.9 43.16,751.6 43.79,753.16 44.41,754.61 45.04,755.96 45.67,757.23 46.29,758.42 46.92,759.54 47.54,760.61 48.17,761.62 48.79,762.58 49.42,763.49 50.05,764.37 50.67,765.21 51.3,766.02 51.92,766.79 52.55,767.54 53.17,768.25 53.8,768.95 54.42,769.62 55.05,770.27 55.68,770.89 56.3,771.5 56.93,772.09 57.55,772.67 58.18,773.22 58.8,773.77 59.43,774.29 60.99,775.56 62.56,776.74 64.12,777.86 65.69,778.92 67.25,779.93 68.81,780.89 70.38,781.8 71.94,782.68 73.51,783.52 75.07,784.32 76.63,785.09 78.2,785.84 79.76,786.55 81.33,787.25 82.89,787.92 84.45,788.56 86.02,789.19 87.58,789.8 89.15,790.39 90.71,790.96 92.27,791.52 93.84,792.06 95.4,792.59 96.97,793.1 98.53,793.6 100.09,794.09 101.66,794.57 103.22,795.03 104.79,795.49 106.35,795.93 107.91,796.37 109.48,796.79 111.04,797.21 112.61,797.62 114.17,798.02 115.73,798.41 117.3,798.8 118.86,799.17 120.43,799.54 121.99,799.91 123.55,800.27 125.12,800.62 126.68,800.96 128.25,801.3 129.81,801.63 131.37,801.96 132.94,802.28 134.5,802.6 136.07,802.91 137.63,803.22 139.19,803.52 140.76,803.82 142.32,804.12 143.89,804.41 145.45,804.69 147.01,804.97 148.58,805.25 150.14,805.53 151.71,805.8 153.27,806.06 154.83,806.33 156.4,806.58 157.96,806.84 159.53,807.09 161.09,807.34 162.65,807.59 164.22,807.83 165.78,808.07 167.35,808.31 168.91,808.55 170.47,808.78 172.04,809.01 173.6,809.24 175.17,809.46 176.73,809.68 178.29,809.9 179.86,810.12 181.42,810.33 182.99,810.55 184.55,810.76 186.11,810.97 187.68,811.17 189.24,811.38 190.81,811.58 192.37,811.78 193.93,811.97 195.5,812.17 197.06,812.36 198.63,812.56 200.19,812.75 201.75,812.94 203.32,813.12 204.88,813.31 206.45,813.49 208.01,813.67 209.57,813.85 211.14,814.03 212.7,814.21 214.27,814.38 215.83,814.56 217.39,814.73 218.96,814.9 220.52,815.07 222.09,815.24 223.65,815.4 225.21,815.57 226.78,815.73 228.34,815.89 229.91,816.05 231.47,816.21 233.03,816.37 234.6,816.53 236.16,816.68 237.73,816.84 239.29,816.99 240.85,817.15 242.42,817.3 243.98,817.45 245.55,817.6 247.11,817.74 248.67,817.89 250.24,818.04 251.8,818.18 253.37,818.32 254.93,818.47 256.49,818.61 258.06,818.75 259.62,818.89 261.19,819.03 262.75,819.17 264.31,819.3 265.88,819.44 267.44,819.57 269.01,819.71 270.1,819.8" fill="none" stroke="#00ffff" stroke-width="1"/>
<rect x="313" y="981" width="237" height="1" fill="#ffff00"/>
<text x="290" y="983.6" font-size="7" fill="#ffff00" textLength="4.2" lengthAdjust="spacingAndGlyphs" stroke="#ffff00" stroke-width="0.25">0</text>
<rect x="313" y="941" width="237" height="1" fill="#ffff00"/>
<text x="290" y="943.6" font-size="7" fill="#ffff00" textLength="14.2" lengthAdjust="spacingAndGlyphs" stroke="#ffff00" stroke-width="0.25">200</text>
<rect x="313" y="902" width="237" height="1" fill="#ffff00"/>
<text x="290" y="904.6" font-size="7" fill="#ffff00" textLength="14.2" lengthAdjust="spacingAndGlyphs" stroke="#ffff00" stroke-width="0.25">400</text>
<rect x="313" y="862" width="237" height="1" fill="#ffff00"/>
<text x="290" y="864.6" font-size="7" fill="#ffff00" textLength="14.2" lengthAdjust="spacingAndGlyphs" stroke="#ffff00" stroke-width="0.25">600</text>
<rect x="313" y="822" width="237" height="1" fill="#ffff00"/>
<text x="290" y="824.6" font-size="7" fill="#ffff00" textLength="14.2" lengthAdjust="spacingAndGlyphs" stroke="#ffff00" stroke-width="0.25">800</text>
<rect x="313" y="783" width="237" height="1" fill="#ffff00"/>
<text x="290" y="785.6" font-size="7" fill="#ffff00" textLength="19.2" lengthAdjust="spacingAndGlyphs" stroke="#ffff00" stroke-width="0.25">1000</text>
<rect x="313" y="743" width="237" height="1" fill="#ffff00"/>
<text x="290" y="745.6" font-size="7" fill="#ffff00" textLength="19.2" lengthAdjust="spacingAndGlyphs" stroke="#ffff00" stroke-width="0.25">1200</text>
<rect x="314" y="743" width="1" height="240" fill="#ffff00"/>
<text x="307" y="998" font-size="7" fill="#ffff00" textLength="4.2" lengthAdjust="spacingAndGlyphs" stroke="#ffff00" stroke-width="0.25">0</text>
<rect x="353" y="743" width="1" height="240" fill="#ffff00"/>
<text x="346" y="998" font-size="7" fill="#ffff00" textLength="9.2" lengthAdjust="spacingAndGlyphs" stroke="#ffff00" stroke-width="0.25">50</text>
<rect x="392" y="743" width="1" height="240" fill="#ffff00"/>
<text x="385" y="998" font-size="7" fill="#ffff00" textLength="14.2" lengthAdjust="spacingAndGlyphs" stroke="#ffff00" stroke-width="0.25">100</text>
<rect x="431" y="743" width="1" height="240" fill="#ffff00"/>
<text x="424" y="998" font-size="7" fill="#ffff00" textLength="14.2" lengthAdjust="spacingAndGlyphs" stroke="#ffff00" stroke-width="0.25">150</text>
<rect x="471" y="743" width="1" height="240" fill="#ffff00"/>
<text x="464" y="998" font-size="7" fill="#ffff00" textLength="14.2" lengthAdjust="spacingAndGlyphs" stroke="#ffff00" stroke-width="0.25">200</text>
<rect x="510" y="743" width="1" height="240" fill="#ffff00"/>
<text x="503" y="998" font-size="7" fill="#ffff00" textLength="14.2" lengthAdjust="spacingAndGlyphs" stroke="#ffff00" stroke-width="0.25">250</text>
<rect x="549" y="743" width="1" height="240" fill="#ffff00"/>
<text x="542" y="998" font-size="7" fill="#ffff00" textLength="14.2" lengthAdjust="spacingAndGlyphs" stroke="#ffff00" stroke-width="0.25">300</text>
<rect x="314" y="731" width="1" height="13" fill="#ffff00"/>
<rect x="313" y="736" width="3" height="5" fill="#ffff00"/>
<rect x="549" y="981" width="12" height="1" fill="#ffff00"/>
<rect x="551" y="980" width="5" height="3" fill="#ffff00"/>
<text x="291" y="726" font-size="7" fill="#ffff00" textLength="39" lengthAdjust="spacingAndGlyphs" stroke="#ffff00" stroke-width="0.25">Re [MPa]</text>
<text x="326.5" y="735" font-size="9" fill="#00ff00" textLength="194.5" lengthAdjust="spacingAndGlyphs" stroke="#00ff00" stroke-width="0.12">Re = Re10 * (1.2 - 0.2 * log (d [mm]))</text>
<text x="564" y="998" font-size="7" fill="#ffff00" textLength="28" lengthAdjust="spacingAndGlyphs" stroke="#ffff00" stroke-width="0.25">d [mm]</text>
<polyline points="321.09,739.9 321.72,741.78 322.34,743.5 322.97,745.09 323.6,746.57 324.23,747.95 324.85,749.24 325.48,750.46 326.11,751.6 326.74,752.69 327.36,753.73 327.99,754.71 328.62,755.65 329.25,756.55 329.87,757.41 330.5,758.24 331.13,759.03 331.76,759.8 332.38,760.54 333.01,761.25 333.64,761.94 334.27,762.61 334.89,763.25 335.52,763.88 336.15,764.49 336.78,765.08 337.4,765.65 338.03,766.21 339.6,767.55 341.17,768.8 342.74,769.98 344.3,771.1 345.87,772.16 347.44,773.17 349.01,774.13 350.58,775.05 352.15,775.93 353.72,776.77 355.29,777.58 356.85,778.36 358.42,779.11 359.99,779.84 361.56,780.54 363.13,781.22 364.7,781.87 366.27,782.51 367.83,783.13 369.4,783.73 370.97,784.31 372.54,784.88 374.11,785.43 375.68,785.96 377.25,786.49 378.82,787 380.38,787.5 381.95,787.98 383.52,788.46 385.09,788.92 386.66,789.38 388.23,789.82 389.8,790.26 391.36,790.68 392.93,791.1 394.5,791.51 396.07,791.91 397.64,792.3 399.21,792.69 400.78,793.07 402.35,793.44 403.91,793.81 405.48,794.17 407.05,794.52 408.62,794.87 410.19,795.21 411.76,795.55 413.33,795.88 414.89,796.2 416.46,796.52 418.03,796.84 419.6,797.15 421.17,797.46 422.74,797.76 424.31,798.06 425.88,798.35 427.44,798.64 429.01,798.92 430.58,799.2 432.15,799.48 433.72,799.76 435.29,800.03 436.86,800.29 438.42,800.56 439.99,800.82 441.56,801.07 443.13,801.33 444.7,801.58 446.27,801.82 447.84,802.07 449.41,802.31 450.97,802.55 452.54,802.79 454.11,803.02 455.68,803.25 457.25,803.48 458.82,803.71 460.39,803.93 461.95,804.15 463.52,804.37 465.09,804.59 466.66,804.8 468.23,805.01 469.8,805.22 471.37,805.43 472.94,805.63 474.5,805.84 476.07,806.04 477.64,806.24 479.21,806.44 480.78,806.63 482.35,806.83 483.92,807.02 485.48,807.21 487.05,807.4 488.62,807.59 490.19,807.77 491.76,807.96 493.33,808.14 494.9,808.32 496.47,808.5 498.03,808.67 499.6,808.85 501.17,809.03 502.74,809.2 504.31,809.37 505.88,809.54 507.45,809.71 509.01,809.88 510.58,810.04 512.15,810.21 513.72,810.37 515.29,810.53 516.86,810.69 518.43,810.85 520,811.01 521.56,811.17 523.13,811.32 524.7,811.48 526.27,811.63 527.84,811.79 529.41,811.94 530.98,812.09 532.54,812.24 534.11,812.38 535.68,812.53 537.25,812.68 538.82,812.82 540.39,812.97 541.96,813.11 543.53,813.25 545.09,813.39 546.66,813.53 548.23,813.67 549.8,813.81 549.8,813.81" fill="none" stroke="#00ffff" stroke-width="1"/>
<rect x="608" y="981" width="237" height="1" fill="#ffff00"/>
<text x="586" y="983.6" font-size="7" fill="#ffff00" textLength="4.2" lengthAdjust="spacingAndGlyphs" stroke="#ffff00" stroke-width="0.25">0</text>
<rect x="608" y="947" width="237" height="1" fill="#ffff00"/>
<text x="586" y="949.6" font-size="7" fill="#ffff00" textLength="14.2" lengthAdjust="spacingAndGlyphs" stroke="#ffff00" stroke-width="0.25">200</text>
<rect x="608" y="913" width="237" height="1" fill="#ffff00"/>
<text x="586" y="915.6" font-size="7" fill="#ffff00" textLength="14.2" lengthAdjust="spacingAndGlyphs" stroke="#ffff00" stroke-width="0.25">400</text>
<rect x="608" y="879" width="237" height="1" fill="#ffff00"/>
<text x="586" y="881.6" font-size="7" fill="#ffff00" textLength="14.2" lengthAdjust="spacingAndGlyphs" stroke="#ffff00" stroke-width="0.25">600</text>
<rect x="608" y="845" width="237" height="1" fill="#ffff00"/>
<text x="586" y="847.6" font-size="7" fill="#ffff00" textLength="14.2" lengthAdjust="spacingAndGlyphs" stroke="#ffff00" stroke-width="0.25">800</text>
<rect x="608" y="811" width="237" height="1" fill="#ffff00"/>
<text x="586" y="813.6" font-size="7" fill="#ffff00" textLength="19.2" lengthAdjust="spacingAndGlyphs" stroke="#ffff00" stroke-width="0.25">1000</text>
<rect x="608" y="777" width="237" height="1" fill="#ffff00"/>
<text x="586" y="779.6" font-size="7" fill="#ffff00" textLength="19.2" lengthAdjust="spacingAndGlyphs" stroke="#ffff00" stroke-width="0.25">1200</text>
<rect x="608" y="743" width="237" height="1" fill="#ffff00"/>
<text x="586" y="745.6" font-size="7" fill="#ffff00" textLength="19.2" lengthAdjust="spacingAndGlyphs" stroke="#ffff00" stroke-width="0.25">1400</text>
<rect x="609" y="743" width="1" height="240" fill="#ffff00"/>
<text x="602" y="998" font-size="7" fill="#ffff00" textLength="4.2" lengthAdjust="spacingAndGlyphs" stroke="#ffff00" stroke-width="0.25">0</text>
<rect x="643" y="743" width="1" height="240" fill="#ffff00"/>
<text x="636" y="998" font-size="7" fill="#ffff00" textLength="14.2" lengthAdjust="spacingAndGlyphs" stroke="#ffff00" stroke-width="0.25">200</text>
<rect x="676" y="743" width="1" height="240" fill="#ffff00"/>
<text x="669" y="998" font-size="7" fill="#ffff00" textLength="14.2" lengthAdjust="spacingAndGlyphs" stroke="#ffff00" stroke-width="0.25">400</text>
<rect x="710" y="743" width="1" height="240" fill="#ffff00"/>
<text x="703" y="998" font-size="7" fill="#ffff00" textLength="14.2" lengthAdjust="spacingAndGlyphs" stroke="#ffff00" stroke-width="0.25">600</text>
<rect x="743" y="743" width="1" height="240" fill="#ffff00"/>
<text x="736" y="998" font-size="7" fill="#ffff00" textLength="14.2" lengthAdjust="spacingAndGlyphs" stroke="#ffff00" stroke-width="0.25">800</text>
<rect x="777" y="743" width="1" height="240" fill="#ffff00"/>
<text x="770" y="998" font-size="7" fill="#ffff00" textLength="19.2" lengthAdjust="spacingAndGlyphs" stroke="#ffff00" stroke-width="0.25">1000</text>
<rect x="810" y="743" width="1" height="240" fill="#ffff00"/>
<text x="803" y="998" font-size="7" fill="#ffff00" textLength="19.2" lengthAdjust="spacingAndGlyphs" stroke="#ffff00" stroke-width="0.25">1200</text>
<rect x="844" y="743" width="1" height="240" fill="#ffff00"/>
<text x="837" y="998" font-size="7" fill="#ffff00" textLength="19.2" lengthAdjust="spacingAndGlyphs" stroke="#ffff00" stroke-width="0.25">1400</text>
<rect x="609" y="731" width="1" height="13" fill="#ffff00"/>
<rect x="608" y="736" width="3" height="5" fill="#ffff00"/>
<rect x="844" y="981" width="12" height="1" fill="#ffff00"/>
<rect x="846" y="980" width="5" height="3" fill="#ffff00"/>
<text x="587" y="726" font-size="7" fill="#ffff00" textLength="77" lengthAdjust="spacingAndGlyphs" stroke="#ffff00" stroke-width="0.25">Sig.A,tau A [MPa]</text>
<text x="635" y="735" font-size="9" fill="#00ff00" textLength="122" lengthAdjust="spacingAndGlyphs" stroke="#00ff00" stroke-width="0.12">Haigh Chart (d=10mm)</text>
<text x="859.5" y="998" font-size="7" fill="#ffff00" textLength="79" lengthAdjust="spacingAndGlyphs" stroke="#ffff00" stroke-width="0.25">Sig.m,tau m [MPa]</text>
<polyline points="609.5,899.22 767.61,927.43 821,981.5" fill="none" stroke="#ff00ff" stroke-width="1"/>
<polyline points="609.5,904.83 762.08,932.03 810.93,981.5" fill="none" stroke="#00ffff" stroke-width="1"/>
<polyline points="609.5,925.4 676.64,942.4 715.25,981.5" fill="none" stroke="#00ff00" stroke-width="1"/>
<polyline points="609.5,981.5 821,767.3" fill="none" stroke="#ffff00" stroke-width="1"/>
</g>
<text x="11.6" y="1012" font-size="7" fill="#c8c8c8" textLength="564" lengthAdjust="spacingAndGlyphs">19.12.2013 18:03 - HEXAGON WST1 V9.0 #0346 - MAN Diesel &amp; Turbo - H:\APPS\TP\TRAIN\51crv4.wst</text>
</svg></body></html>
